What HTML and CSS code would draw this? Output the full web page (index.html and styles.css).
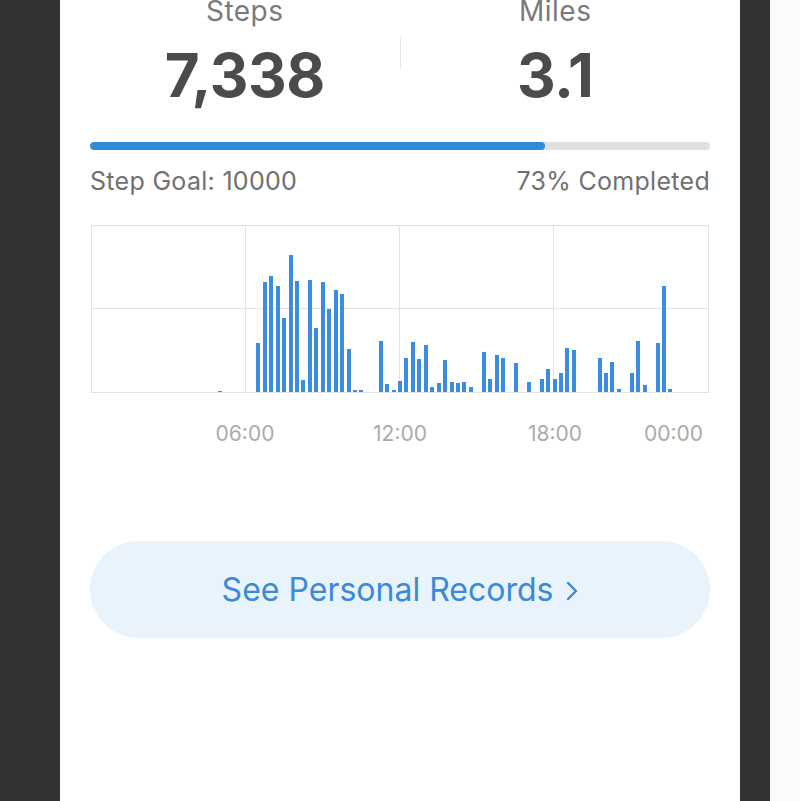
FILE: index.html
```html
<!DOCTYPE html>
<html>
<head>
<meta charset="utf-8">
<link rel="stylesheet" href="styles.css">
</head>
<body>
<div class="frame">
  <div class="side-left"></div>
  <main class="panel">
    <section class="stats">
      <div class="stat">
        <div class="stat-label">Steps</div>
        <div class="stat-value">7,338</div>
      </div>
      <div class="divider"></div>
      <div class="stat">
        <div class="stat-label">Miles</div>
        <div class="stat-value">3.1</div>
      </div>
    </section>

    <div class="progress"><div class="progress-fill" style="width:73.4%"></div></div>
    <div class="goal-row">
      <span>Step Goal: 10000</span>
      <span>73% Completed</span>
    </div>

    <div class="chart">
      <div class="grid-lines">
        <div class="cell"></div><div class="cell"></div><div class="cell"></div><div class="cell"></div>
        <div class="cell"></div><div class="cell"></div><div class="cell"></div><div class="cell"></div>
      </div>
      <div class="bars">
        <i></i><i></i><i></i><i></i><i></i><i></i><i></i><i></i><i></i><i></i>
        <i></i><i></i><i></i><i></i><i></i><i></i><i></i><i></i><i></i>
        <i style="height:1px"></i>
        <i></i><i></i><i></i><i></i><i></i>
        <i style="height:49px"></i>
        <i style="height:110px"></i>
        <i style="height:116px"></i>
        <i style="height:106px"></i>
        <i style="height:74px"></i>
        <i style="height:137px"></i>
        <i style="height:111px"></i>
        <i style="height:12px"></i>
        <i style="height:112px"></i>
        <i style="height:64px"></i>
        <i style="height:110px"></i>
        <i style="height:83px"></i>
        <i style="height:102px"></i>
        <i style="height:98px"></i>
        <i style="height:43px"></i>
        <i style="height:2px"></i>
        <i style="height:2px"></i>
        <i></i><i></i>
        <i style="height:51px"></i>
        <i style="height:8px"></i>
        <i style="height:2px"></i>
        <i style="height:11px"></i>
        <i style="height:34px"></i>
        <i style="height:50px"></i>
        <i style="height:33px"></i>
        <i style="height:47px"></i>
        <i style="height:5px"></i>
        <i style="height:9px"></i>
        <i style="height:32px"></i>
        <i style="height:10px"></i>
        <i style="height:9px"></i>
        <i style="height:10px"></i>
        <i style="height:5px"></i>
        <i></i>
        <i style="height:40px"></i>
        <i style="height:13px"></i>
        <i style="height:37px"></i>
        <i style="height:34px"></i>
        <i></i>
        <i style="height:29px"></i>
        <i></i>
        <i style="height:10px"></i>
        <i></i>
        <i style="height:13px"></i>
        <i style="height:23px"></i>
        <i style="height:13px"></i>
        <i style="height:19px"></i>
        <i style="height:44px"></i>
        <i style="height:42px"></i>
        <i></i><i></i><i></i>
        <i style="height:34px"></i>
        <i style="height:19px"></i>
        <i style="height:30px"></i>
        <i style="height:3px"></i>
        <i></i>
        <i style="height:19px"></i>
        <i style="height:51px"></i>
        <i style="height:7px"></i>
        <i></i>
        <i style="height:49px"></i>
        <i style="height:106px"></i>
        <i style="height:3px"></i>
      </div>
    </div>
    <div class="time-labels">
      <div class="tick"><span>06:00</span></div>
      <div class="tick"><span>12:00</span></div>
      <div class="tick"><span>18:00</span></div>
      <div class="tick last"><span>00:00</span></div>
    </div>

    <button class="records-btn">See Personal Records<svg class="chev" width="12" height="20" viewBox="0 0 12 20"><path d="M2 2 L10 10 L2 18" fill="none" stroke="#3a8ad6" stroke-width="2.4" stroke-linecap="round" stroke-linejoin="round"/></svg></button>
  </main>
  <div class="side-right"></div>
  <div class="outside"></div>
</div>
</body>
</html>
```

FILE: styles.css
```css
html, body {
  margin: 0;
  padding: 0;
  height: 100%;
  background: #333333;
  overflow: hidden;
}
.frame {
  display: grid;
  grid-template-columns: 60px 680px 30px 30px;
  height: 801px;
  font-family: "Inter", "Roboto", sans-serif;
}
.side-left { background: #323232; }
.side-right { background: #323232; }
.outside { background: #fbfbfb; }
.panel {
  background: #ffffff;
  padding: 0 30px;
  display: flex;
  flex-direction: column;
}
.stats {
  display: grid;
  grid-template-columns: 1fr 1px 1fr;
  margin-top: -4px;
}
.stat {
  display: flex;
  flex-direction: column;
  align-items: center;
}
.stat-label {
  font-size: 28px;
  line-height: 30px;
  color: #7a7a7a;
  letter-spacing: 0.5px;
}
.stat-value {
  margin-top: 14px;
  font-size: 60px;
  line-height: 70px;
  font-weight: 700;
  color: #4b4b4b;
  letter-spacing: -0.5px;
}
.divider {
  background: #e6e6e6;
  margin-top: 41px;
  height: 31px;
}
.progress {
  margin-top: 32px;
  height: 8px;
  border-radius: 4px;
  background: #e0e0e0;
  overflow: hidden;
}
.progress-fill {
  height: 100%;
  background: #3189dc;
  border-radius: 4px;
}
.goal-row {
  display: flex;
  justify-content: space-between;
  margin-top: 16px;
  font-size: 25px;
  line-height: 30px;
  color: #707070;
  letter-spacing: 0.3px;
}
.chart {
  margin-top: 29px;
  margin-left: 1px;
  margin-right: 1px;
  height: 166px;
  border: 1px solid #e2e2e2;
  position: relative;
}
.grid-lines {
  display: grid;
  grid-template-columns: repeat(4, 1fr);
  grid-template-rows: repeat(2, 1fr);
  height: 100%;
}
.cell {
  border-right: 1px solid #e4e4e4;
  border-bottom: 1px solid #e4e4e4;
}
.cell:nth-child(4n) { border-right: none; }
.cell:nth-child(n+5) { border-bottom: none; }
.bars {
  position: absolute;
  left: 0;
  right: 0;
  bottom: 0;
  top: 0;
  display: flex;
  align-items: flex-end;
  padding-left: 2.22px;
  overflow: hidden;
}
.bars i {
  flex: 0 0 4px;
  margin: 0 1.21875px;
  background: #3a8de0;
  display: block;
}
.time-labels {
  display: grid;
  grid-template-columns: repeat(4, 1fr);
  margin-top: 28px;
  font-size: 21px;
  line-height: 26px;
  color: #ababab;
}
.tick {
  display: flex;
  justify-content: flex-end;
}
.tick span { transform: translateX(50%); }
.tick.last span { transform: none; margin-right: 7px; }
.records-btn {
  margin-top: 94px;
  height: 97px;
  border: none;
  border-radius: 49px;
  background: #e8f3fb;
  color: #3a8ad6;
  font-family: "Inter", "Roboto", sans-serif;
  font-size: 32px;
  padding: 0;
  display: flex;
  align-items: center;
  justify-content: center;
}
.chev { margin-left: 13px; margin-top: 2px; }
```
